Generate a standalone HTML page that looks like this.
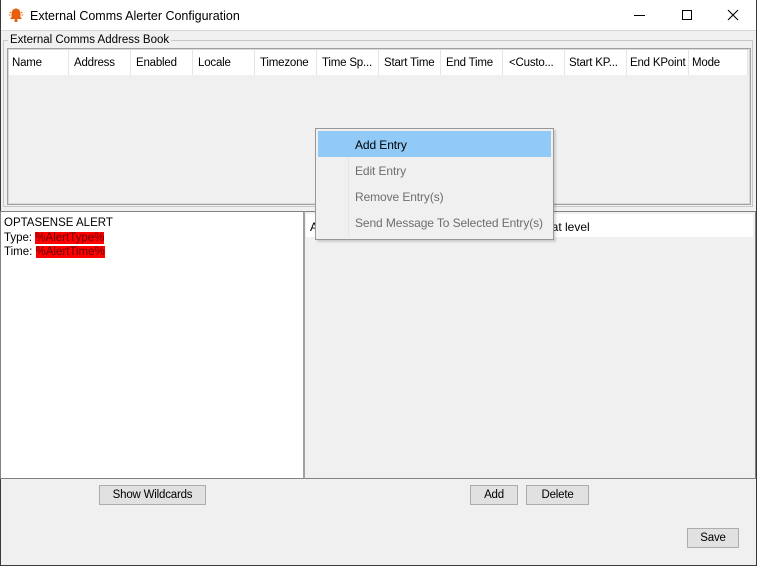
<!DOCTYPE html>
<html><head><style>
*{box-sizing:border-box;margin:0;padding:0}
body{width:757px;height:566px;background:#f0f0f0;font-family:"Liberation Sans",sans-serif;font-size:12px;color:#000;position:relative;overflow:hidden}
.a{position:absolute}
.win{left:0;top:0;width:757px;height:566px;border:1px solid #3a3a3a;border-top:none}
.title{left:1px;top:0;width:755px;height:31px;background:#fff;border-bottom:1px solid #d8d8d8}
.th{top:50px;height:25px;background:#fff;border-right:1px solid #e5e5e5;padding:7px 0 0 3px;white-space:nowrap;overflow:hidden;font-size:11.5px;letter-spacing:-0.2px}
.btn{background:#e1e1e1;border:1px solid #adadad;text-align:center;line-height:19px;height:20px;font-size:11.5px;letter-spacing:-0.2px}
.mi{left:318px;width:233px;height:26px;line-height:28px;padding-left:37px;color:#6d6d6d;letter-spacing:-0.1px}
</style></head><body>
<div class="a win"></div>
<div class="a title"></div>
<svg class="a" style="left:8px;top:7px" width="16" height="16" viewBox="0 0 16 16"><path d="M8 1.5c-3 0-4.5 2.5-4.5 5.5v3l-1.5 2h12l-1.5-2v-3c0-3-1.5-5.5-4.5-5.5z" fill="#e8600e"/><circle cx="8" cy="13.5" r="1.6" fill="#e8600e"/><path d="M1.5 5l1.5 1M14.5 5l-1.5 1M1 8h1.5M15 8h-1.5" stroke="#e8600e" stroke-width="1"/></svg>
<div class="a" style="left:30px;top:9px;font-size:12.5px">External Comms Alerter Configuration</div>
<div class="a" style="left:634px;top:15px;width:11px;height:1px;background:#000"></div>
<div class="a" style="left:682px;top:10px;width:10px;height:10px;border:1px solid #000"></div>
<svg class="a" style="left:727px;top:9px" width="12" height="12"><path d="M1 1L11 11M11 1L1 11" stroke="#000" stroke-width="1.1"/></svg>
<div class="a" style="left:3px;top:40px;width:750px;height:167px;border:1px solid #c8c8c8"></div>
<div class="a" style="left:8px;top:34px;background:#f0f0f0;padding:0 2px;font-size:11.5px">External Comms Address Book</div>
<div class="a" style="left:7px;top:48px;width:744px;height:157px;border:1px solid #a0a0a0;background:#f0f0f0"></div>
<div class="a" style="left:8px;top:49px;width:742px;height:155px;border:1px solid #d8d8d8"></div>
<div class="a th" style="left:9px;width:60px">Name</div>
<div class="a th" style="left:69px;width:62px;padding-left:5px">Address</div>
<div class="a th" style="left:131px;width:62px;padding-left:5px">Enabled</div>
<div class="a th" style="left:193px;width:62px;padding-left:5px">Locale</div>
<div class="a th" style="left:255px;width:62px;padding-left:5px">Timezone</div>
<div class="a th" style="left:317px;width:62px;padding-left:5px">Time Sp...</div>
<div class="a th" style="left:379px;width:62px;padding-left:5px">Start Time</div>
<div class="a th" style="left:441px;width:62px;padding-left:5px">End Time</div>
<div class="a th" style="left:503px;width:62px;padding-left:6px">&lt;Custo...</div>
<div class="a th" style="left:565px;width:62px;padding-left:4px">Start KP...</div>
<div class="a th" style="left:627px;width:62px;padding-left:3px">End KPoint</div>
<div class="a th" style="left:689px;width:59px;padding-left:3px">Mode</div>
<div class="a" style="left:0px;top:211px;width:305px;height:268px;background:#fff;border:1px solid #828282;border-right:2px solid #a0a0a0"></div>
<div class="a" style="left:4px;top:216px;line-height:14.5px;font-size:11.5px">OPTASENSE ALERT<br>Type: <span style="background:#f00;color:#600">%AlertType%</span><br>Time: <span style="background:#f00;color:#600">%AlertTime%</span></div>
<div class="a" style="left:305px;top:211px;width:451px;height:268px;border:1px solid #828282;border-left:none"></div>
<div class="a" style="left:306px;top:214px;width:447px;height:23px;background:#fff"></div>
<div class="a" style="left:310px;top:220px">A</div>
<div class="a" style="left:545px;top:220px">eat level</div>
<div class="a btn" style="left:99px;top:485px;width:107px">Show Wildcards</div>
<div class="a btn" style="left:470px;top:485px;width:48px">Add</div>
<div class="a btn" style="left:526px;top:485px;width:63px">Delete</div>
<div class="a btn" style="left:687px;top:528px;width:52px">Save</div>
<div class="a" style="left:315px;top:128px;width:239px;height:112px;background:#f0f0f0;border:1px solid #979797;box-shadow:2px 2px 2px rgba(0,0,0,.15)"></div>
<div class="a" style="left:348px;top:131px;width:1px;height:106px;background:#e6e6e6"></div>
<div class="a mi" style="top:131px;background:#91c9f7;color:#000">Add Entry</div>
<div class="a mi" style="top:157px">Edit Entry</div>
<div class="a mi" style="top:183px">Remove Entry(s)</div>
<div class="a mi" style="top:209px">Send Message To Selected Entry(s)</div>
</body></html>
